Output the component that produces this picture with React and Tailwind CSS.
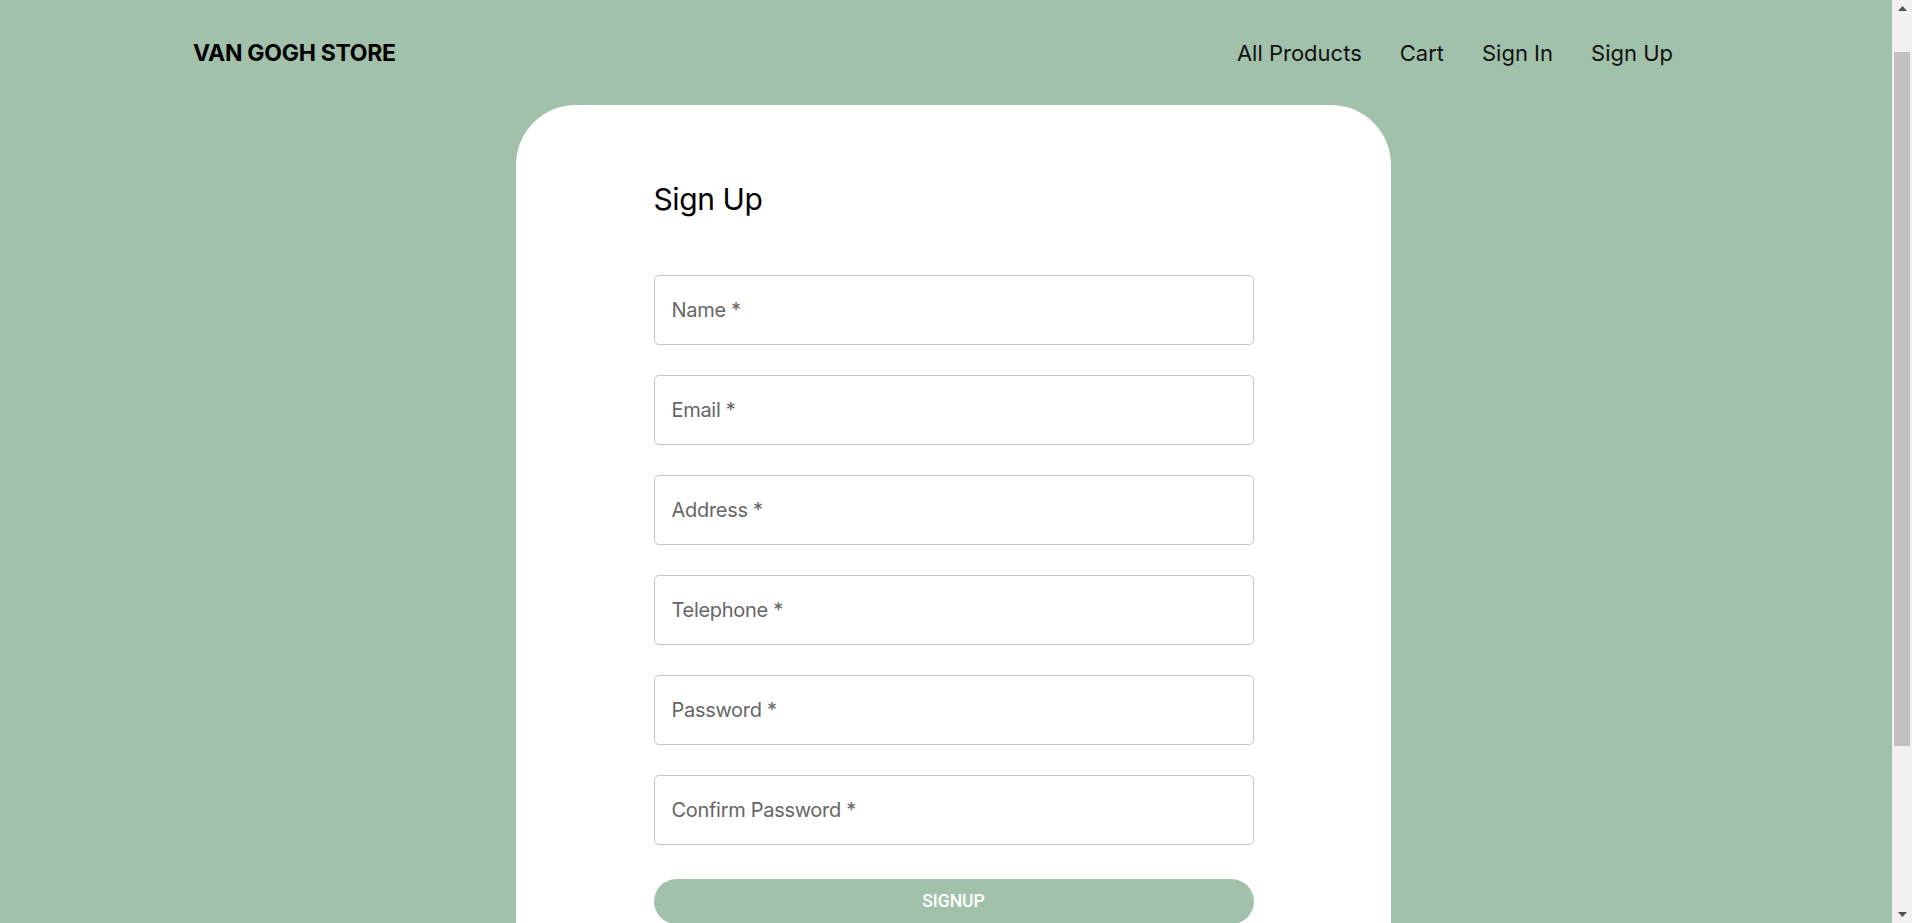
import { useState } from "react";

const fields = [
  { name: "name", label: "Name *", type: "text" },
  { name: "email", label: "Email *", type: "email" },
  { name: "address", label: "Address *", type: "text" },
  { name: "telephone", label: "Telephone *", type: "tel" },
  { name: "password", label: "Password *", type: "password" },
  { name: "confirm", label: "Confirm Password *", type: "password" },
];

const navLinks = ["All Products", "Cart", "Sign In", "Sign Up"];

const Header = () => (
  <header className="flex h-[105px] shrink-0 items-center justify-between pl-[193px] pr-[219px] pt-[1px]">
    <a href="#" className="text-[23px] font-bold tracking-[-0.3px] text-black">
      VAN GOGH STORE
    </a>
    <nav className="flex items-center gap-[38px]">
      {navLinks.map((link) => (
        <a key={link} href="#" className="text-[22px] font-normal tracking-[0px] text-[#111]">
          {link}
        </a>
      ))}
    </nav>
  </header>
);

const SignUpForm = () => {
  const [values, setValues] = useState({});

  const handleChange = (e) =>
    setValues({ ...values, [e.target.name]: e.target.value });

  return (
    <div className="ml-[516px] w-[875px] flex-1 rounded-t-[60px] bg-white pt-[76px]">
      <div className="mx-auto w-[600px]">
        <h1 className="mb-[58px] text-[30px] font-normal leading-[1.2] tracking-[-0.4px] text-black">
          Sign Up
        </h1>
        <form className="flex flex-col" onSubmit={(e) => e.preventDefault()}>
          <div className="flex flex-col gap-[30px]">
            {fields.map((field) => (
              <input
                key={field.name}
                name={field.name}
                type={field.type}
                value={values[field.name] || ""}
                onChange={handleChange}
                placeholder={field.label}
                className="h-[70px] w-full rounded-[5px] border border-[#c4c4c4] px-[17px] text-[20px] tracking-[-0.3px] text-black outline-none placeholder:text-[#666]"
              />
            ))}
          </div>
          <button
            type="submit"
            className="mt-[34px] h-[45px] w-full rounded-full bg-[#a2c1aa] font-['Roboto',Arial,sans-serif] text-[17.5px] font-medium text-white"
          >
            SIGNUP
          </button>
        </form>
      </div>
    </div>
  );
};

const Scrollbar = () => (
  <div className="flex w-[20px] shrink-0 flex-col bg-[#f1f1f1]">
    <div className="flex h-[17px] items-center justify-center">
      <svg width="9" height="5" viewBox="0 0 9 5">
        <path d="M0 5 L4.5 0 L9 5 Z" fill="#505050" />
      </svg>
    </div>
    <div className="mx-[2px] mt-[35px] h-[694px] bg-[#c1c1c1]" />
    <div className="flex-1" />
    <div className="flex h-[17px] items-center justify-center">
      <svg width="9" height="5" viewBox="0 0 9 5">
        <path d="M0 0 L9 0 L4.5 5 Z" fill="#505050" />
      </svg>
    </div>
  </div>
);

export default function App() {
  return (
    <div className="flex h-[923px] w-full overflow-hidden bg-[#a2c1aa] font-['Inter','Lato',sans-serif]">
      <main className="flex min-w-0 flex-1 flex-col">
        <Header />
        <SignUpForm />
      </main>
      <Scrollbar />
    </div>
  );
}
